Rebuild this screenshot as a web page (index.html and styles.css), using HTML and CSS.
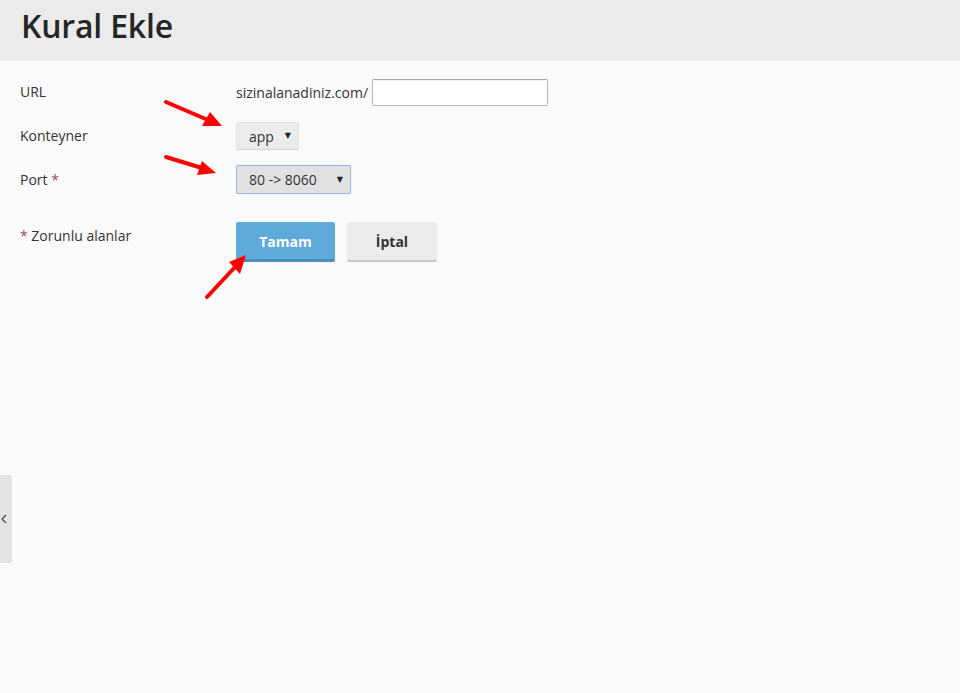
FILE: index.html
```html
<!DOCTYPE html>
<html lang="tr">
<head>
<meta charset="utf-8">
<title>Kural Ekle</title>
<link rel="stylesheet" href="styles.css">
</head>
<body>
<header class="page-header">
  <h1 class="page-title">Kural Ekle</h1>
</header>
<main class="form">
  <div class="row row-url">
    <div class="label">URL</div>
    <div class="field">
      <span class="prefix">sizinalanadiniz.com/</span>
      <span class="text-input"></span>
    </div>
  </div>
  <div class="row row-container">
    <div class="label">Konteyner</div>
    <div class="field">
      <span class="select select-app">app<span class="caret">▼</span></span>
    </div>
  </div>
  <div class="row row-port">
    <div class="label">Port <span class="req">*</span></div>
    <div class="field">
      <span class="select select-port">80 -&gt; 8060<span class="caret">▼</span></span>
    </div>
  </div>
  <div class="row row-actions">
    <div class="label"><span class="req">*</span> Zorunlu alanlar</div>
    <div class="field buttons">
      <span class="btn btn-primary">Tamam</span>
      <span class="btn btn-default">İptal</span>
    </div>
  </div>
</main>
<div class="side-tab">
  <svg class="chev" width="6" height="10" viewBox="0 0 6 10"><polyline points="5,1 1,5 5,9" fill="none" stroke="#444" stroke-width="1.2"/></svg>
</div>
<svg class="arrows" width="960" height="693" viewBox="0 0 960 693">
  <g stroke="#ff0000" stroke-width="4" stroke-linecap="round" fill="none">
    <line x1="166" y1="102" x2="208" y2="120"/>
    <line x1="166" y1="157" x2="202" y2="168"/>
    <line x1="207" y1="297" x2="236" y2="266"/>
  </g>
  <g fill="#ff0000">
    <polygon points="222,126 202,126 210,112"/>
    <polygon points="216,173 197,175 202,161"/>
    <polygon points="246,255 240,274 229,262"/>
  </g>
</svg>
</body>
</html>
```
FILE: styles.css
```css
html, body {
  margin: 0;
  padding: 0;
}
body {
  background: #fafafa;
  font-family: "Open Sans", "Liberation Sans", sans-serif;
  font-size: 14px;
  color: #333;
  width: 960px;
  height: 693px;
  overflow: hidden;
  position: relative;
}
.page-header {
  background: #ebebeb;
  height: 61px;
  box-sizing: border-box;
  padding: 6px 0 0 21px;
}
.page-title {
  margin: 0;
  font-size: 32px;
  font-weight: 600;
  line-height: 40px;
  color: #262626;
  letter-spacing: -0.2px;
}
.form {
  padding: 17px 0 0 20px;
}
.row {
  display: flex;
  align-items: center;
}
.label {
  width: 216px;
  line-height: 20px;
}
.req {
  color: #a94466;
}
.field {
  display: flex;
  align-items: center;
}
.row-url {
  height: 28px;
}
.row-container {
  margin-top: 16px;
  height: 28px;
}
.row-port {
  margin-top: 15px;
  height: 29px;
}
.row-actions {
  margin-top: 28px;
  align-items: flex-start;
}
.row-actions .label {
  padding-top: 4px;
}
.prefix {
  color: #333;
}
.text-input {
  display: block;
  margin-left: 4px;
  width: 174px;
  height: 25px;
  background: #fff;
  border: 1px solid #b5b5b5;
  border-top-color: #a8a8a8;
  border-radius: 2px;
  box-shadow: inset 0 1px 1px rgba(0,0,0,0.06);
}
.select {
  display: flex;
  align-items: center;
  box-sizing: border-box;
  position: relative;
  color: #333;
  border-radius: 2px;
}
.caret {
  font-size: 8px;
  position: absolute;
  right: 7px;
  top: 50%;
  transform: translateY(-60%);
  color: #222;
  font-family: "DejaVu Sans", sans-serif;
}
.select-app {
  width: 63px;
  height: 28px;
  padding-left: 12px;
  background: #ebebeb;
  border: 1px solid #e3e3e3;
  border-bottom-color: #d6d6d6;
}
.select-port {
  width: 115px;
  height: 29px;
  padding-left: 12px;
  background: #e1e1e1;
  border: 1px solid #9db3e4;
  box-shadow: 0 0 1px #c0d0f0;
}
.buttons {
  gap: 12px;
}
.btn {
  display: flex;
  align-items: center;
  justify-content: center;
  box-sizing: border-box;
  height: 40px;
  font-weight: 700;
  border-radius: 2px;
}
.btn-primary {
  width: 99px;
  background: #5eaadb;
  color: #fff;
  border-bottom: 3px solid #4f8db8;
  padding-top: 2px;
}
.btn-default {
  width: 90px;
  background: #ebebeb;
  color: #333;
  border-bottom: 2px solid #c8c8c8;
  padding-top: 1px;
}
.side-tab {
  position: absolute;
  left: 0;
  top: 475px;
  width: 12px;
  height: 88px;
  background: #e3e3e3;
  border-radius: 0 3px 3px 0;
}
.chev {
  position: absolute;
  left: 1px;
  top: 39px;
}
.arrows {
  position: absolute;
  left: 0;
  top: 0;
  pointer-events: none;
}
```
